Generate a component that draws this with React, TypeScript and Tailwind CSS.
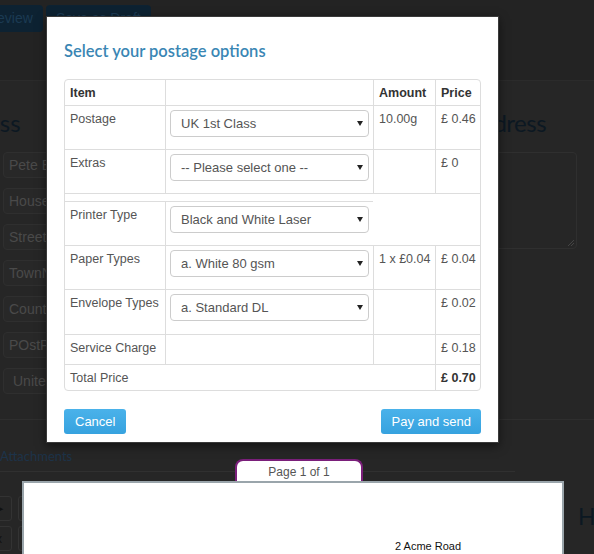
import React from "react";

const ARIAL = "font-['Liberation_Sans',Arial,sans-serif]";
const LATO = "font-['Lato','Open_Sans',sans-serif]";

function SelectBox({ value }: { value: string }) {
  return (
    <div className="relative">
      <select
        defaultValue={value}
        className={`${ARIAL} block h-[27px] w-full appearance-none rounded-[4px] border border-[#cccccc] bg-white pl-[10px] pr-6 text-[13px] text-[#555555] outline-none`}
      >
        <option>{value}</option>
      </select>
      <svg
        className="pointer-events-none absolute right-[6px] top-[11px]"
        width="6"
        height="5"
        viewBox="0 0 6 5"
      >
        <path d="M0 0h6L3 5z" fill="#222" />
      </svg>
    </div>
  );
}

function Cell({
  className = "",
  children,
}: {
  className?: string;
  children?: React.ReactNode;
}) {
  return (
    <div
      className={`shrink-0 whitespace-nowrap px-[5px] pt-[4px] leading-[18px] ${className}`}
    >
      {children}
    </div>
  );
}

function SelectCell({ value }: { value: string }) {
  return (
    <div className="w-[208px] shrink-0 border-l border-[#dddddd] px-[4px] pt-[4px]">
      <SelectBox value={value} />
    </div>
  );
}

function PostageModal() {
  return (
    <div className="absolute left-[46px] top-[16px] h-[427px] w-[453px] border border-[#3a3a3a] bg-white px-[17px] pt-[24px] shadow-[0_3px_9px_rgba(0,0,0,0.5)]">
      <h4
        className={`${LATO} h-[20px] text-[16.5px] font-semibold leading-[20px] text-[#3a86b4]`}
      >
        Select your postage options
      </h4>

      {/* Postage table */}
      <div
        className={`${ARIAL} mt-[18px] overflow-hidden rounded-[4px] border border-[#dddddd] text-[12.5px] text-[#555555]`}
      >
        <div className="flex h-[25px] font-bold text-[#333333]">
          <Cell className="w-[100px]">Item</Cell>
          <Cell className="w-[208px] border-l border-[#dddddd]" />
          <Cell className="w-[62px] border-l border-[#dddddd]">Amount</Cell>
          <Cell className="flex-1 border-l border-[#dddddd]">Price</Cell>
        </div>

        <div className="flex h-[44px] border-t border-[#dddddd]">
          <Cell className="w-[100px]">Postage</Cell>
          <SelectCell value="UK 1st Class" />
          <Cell className="w-[62px] border-l border-[#dddddd]">10.00g</Cell>
          <Cell className="flex-1 border-l border-[#dddddd]">£ 0.46</Cell>
        </div>

        <div className="flex h-[44px] border-t border-[#dddddd]">
          <Cell className="w-[100px]">Extras</Cell>
          <SelectCell value="-- Please select one --" />
          <Cell className="w-[62px] border-l border-[#dddddd]" />
          <Cell className="flex-1 border-l border-[#dddddd]">£ 0</Cell>
        </div>

        {/* printer options sit in a nested table */}
        <div className="h-[8px] border-t border-[#dddddd]" />
        <div className="flex h-[44px]">
          <div className="flex w-[308px] border-t border-[#dddddd]">
            <Cell className="w-[100px]">Printer Type</Cell>
            <SelectCell value="Black and White Laser" />
          </div>
        </div>

        <div className="flex h-[44px] border-t border-[#dddddd]">
          <Cell className="w-[100px]">Paper Types</Cell>
          <SelectCell value="a. White 80 gsm" />
          <Cell className="w-[62px] border-l border-[#dddddd]">1 x £0.04</Cell>
          <Cell className="flex-1 border-l border-[#dddddd]">£ 0.04</Cell>
        </div>

        <div className="flex h-[45px] border-t border-[#dddddd]">
          <Cell className="w-[100px]">Envelope Types</Cell>
          <SelectCell value="a. Standard DL" />
          <Cell className="w-[62px] border-l border-[#dddddd]" />
          <Cell className="flex-1 border-l border-[#dddddd]">£ 0.02</Cell>
        </div>

        <div className="flex h-[30px] border-t border-[#dddddd]">
          <Cell className="w-[100px]">Service Charge</Cell>
          <Cell className="w-[208px] border-l border-[#dddddd]" />
          <Cell className="w-[62px] border-l border-[#dddddd]" />
          <Cell className="flex-1 border-l border-[#dddddd]">£ 0.18</Cell>
        </div>

        <div className="flex h-[26px] border-t border-[#dddddd]">
          <Cell className="w-[370px]">Total Price</Cell>
          <Cell className="flex-1 border-l border-[#dddddd] font-bold text-[#333333]">
            £ 0.70
          </Cell>
        </div>
      </div>

      <div className={`${ARIAL} mt-[18px] flex justify-between`}>
        <button className="h-[25px] rounded-[3px] bg-gradient-to-b from-[#4ab2ea] to-[#36a2df] px-[11px] text-[13px] text-white">
          Cancel
        </button>
        <button className="h-[25px] rounded-[3px] bg-gradient-to-b from-[#4ab2ea] to-[#36a2df] px-[10px] text-[13px] text-white">
          Pay and send
        </button>
      </div>
    </div>
  );
}

const senderFields = ["Pete Brown", "House Name", "StreetName", "TownName", "County", "POstPostcode"];

export default function App() {
  return (
    <div
      className={`${ARIAL} relative h-[554px] w-[594px] overflow-hidden bg-[#262626]`}
    >
      {/* top toolbar */}
      <div className="flex h-[81px] items-start gap-[3px] border-b border-[#2b2b2b] bg-[#232323] pt-[5px]">
        <button className="-ml-[27px] h-[27px] rounded-[4px] bg-[#0d2232] px-[10px] text-[14px] text-[#1b3a53]">
          Preview
        </button>
        <button className="h-[27px] w-[105px] rounded-[4px] bg-[#0d2232] text-[14px] text-[#1b3a53]">
          Save as Draft
        </button>
      </div>

      {/* address section */}
      <div className="flex h-[339px] border-b border-[#2e2e2e]">
        <div className="w-[330px] shrink-0 pl-[3px] pt-[26px]">
          <h2
            className={`${LATO} -ml-[67px] h-[32px] whitespace-nowrap text-[24px] leading-[32px] text-[#0c1822]`}
          >
            Address
          </h2>
          <div className="mt-[13px] flex flex-col gap-[10px]">
            {senderFields.map((f) => (
              <div
                key={f}
                className="flex h-[26px] items-center rounded-[4px] border border-[#2f2f2f] bg-[#282828] pl-[5px] text-[14px] text-[#4a4a4a]"
              >
                {f}
              </div>
            ))}
            <div className="flex h-[26px] items-center rounded-[4px] border border-[#2f2f2f] bg-[#282828] pl-[9px] text-[14px] text-[#4a4a4a]">
              United Kingdom
            </div>
          </div>
        </div>
        <div className="ml-auto mr-[17px] w-[112px] pt-[26px]">
          <h2
            className={`${LATO} h-[32px] whitespace-nowrap text-[24px] leading-[32px] tracking-[-0.5px] text-[#0c1822]`}
          >
            Address
          </h2>
          <div className="relative mt-[13px] h-[97px] rounded-[4px] border border-[#2f2f2f] bg-[#262626]">
            <svg
              className="absolute bottom-[2px] right-[2px]"
              width="7"
              height="7"
              viewBox="0 0 7 7"
            >
              <path d="M1 7L7 1M4 7L7 4" stroke="#444" strokeWidth="1" />
            </svg>
          </div>
        </div>
      </div>

      {/* attachments */}
      <div
        className={`${LATO} h-[52px] w-[515px] border-b border-[#303030] pt-[27px] text-[13px] leading-[18px] text-[#1d3349]`}
      >
        Attachments
      </div>

      {/* letter preview */}
      <div className="-mt-[13px] flex">
        <div className="w-[22px] shrink-0 overflow-hidden">
          <div className="-ml-[14px] mt-[37px] flex gap-[6px]">
            <div className="flex flex-col gap-[5px]">
              <div className="flex h-[25px] w-[26px] items-center justify-center rounded-[3px] border border-[#333] text-[11px] text-[#111]">
                ▶
              </div>
              <div className="flex h-[25px] w-[26px] items-end justify-center rounded-[3px] border border-[#333] pb-[2px] text-[12px] text-[#111]">
                x
              </div>
            </div>
            <div className="flex flex-col gap-[5px]">
              <div className="h-[25px] w-[26px] rounded-[3px] border border-[#333]" />
              <div className="h-[25px] w-[26px] rounded-[3px] border border-[#333]" />
            </div>
          </div>
        </div>

        <div className="w-[542px] shrink-0">
          <div className="ml-[213px] flex h-[22px] w-[128px] items-center justify-center rounded-t-[8px] border-2 border-b-0 border-[#7a1f7a] bg-white pt-[2px] text-[12px] text-[#555555]">
            Page 1 of 1
          </div>
          <div className="h-[80px] border-2 border-b-0 border-[#9aa5ab] bg-white pl-[371px] pt-[57px] text-[11px] leading-[13px] text-[#111111]">
            2 Acme Road
          </div>
        </div>

        <div
          className={`${LATO} ml-[14px] mt-[43px] shrink-0 text-[23px] leading-[28px] text-[#0c1822]`}
        >
          Help
        </div>
      </div>

      <PostageModal />
    </div>
  );
}
